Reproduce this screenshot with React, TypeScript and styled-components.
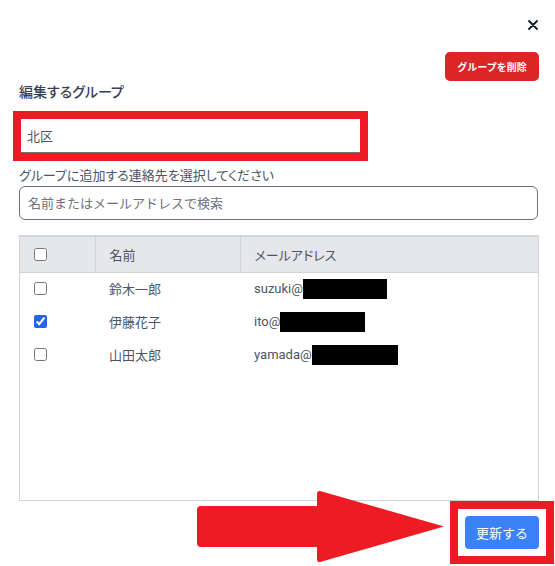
import React from 'react';
import styled, { createGlobalStyle } from 'styled-components';

const GlobalStyle = createGlobalStyle`
    html, body {
        margin: 0;
        padding: 0;
        background: #ffffff;
    }
    body {
        font-family: Roboto, "Noto Sans CJK JP", sans-serif;
        font-feature-settings: "palt";
        color: #4b5563;
    }
    * {
        box-sizing: border-box;
    }
`;

const Modal = styled.section`
    display: flex;
    flex-direction: column;
    width: 555px;
    height: 566px;
    padding: 0 16px 0 19px;
    background: #ffffff;
`;

const CloseRow = styled.div`
    display: flex;
    justify-content: flex-end;
    align-items: flex-start;
    height: 52px;
    padding-top: 20px;
`;

const CloseButton = styled.button`
    display: flex;
    width: 10px;
    height: 10px;
    padding: 0;
    margin-right: 1px;
    border: none;
    background: none;
    cursor: pointer;
`;

const DeleteRow = styled.div`
    display: flex;
    justify-content: flex-end;
`;

const DeleteButton = styled.button`
    height: 29px;
    width: 94px;
    padding: 0;
    border: none;
    border-radius: 5px;
    background: #dc2626;
    color: #ffffff;
    font-family: inherit;
    font-size: 10px;
    font-weight: 700;
    cursor: pointer;
`;

const Title = styled.h2`
    margin: 1px 0 0;
    font-size: 14px;
    line-height: 20px;
    font-weight: 500;
    color: #374151;
`;

/* 赤枠の注釈 */
const Annotation = styled.div`
    width: fit-content;
    border: 8px solid #ed1c24;
`;

const NameHighlight = styled(Annotation)`
    margin: 9px 0 0 -6px;
`;

const NameInput = styled.input`
    display: block;
    width: 339px;
    height: 34px;
    padding: 0 6px;
    border: none;
    border-bottom: 1px solid #6b7280;
    outline: none;
    font-family: inherit;
    font-size: 13px;
    color: #4b5563;
`;

const FieldLabel = styled.label`
    margin-top: 6px;
    font-size: 13px;
    line-height: 18px;
    color: #4b5563;
`;

const SearchInput = styled.input`
    width: 519px;
    height: 34px;
    margin-top: 1px;
    padding: 0 8px;
    border: 1px solid #6b7280;
    border-radius: 6px;
    outline: none;
    font-family: inherit;
    font-size: 13px;
    color: #4b5563;

    &::placeholder {
        color: #6b7280;
    }
`;

const TableBox = styled.div`
    height: 266px;
    margin-top: 15px;
    border: 1px solid #d1d5db;
    border-top-width: 2px;
`;

const Table = styled.table`
    width: 100%;
    border-collapse: collapse;
    table-layout: fixed;
`;

const HeadCell = styled.th<{ $w?: number }>`
    width: ${({ $w }) => ($w ? `${$w}px` : 'auto')};
    height: 35px;
    padding: 0 14px;
    background: #e5e7eb;
    border-bottom: 1px solid #d1d5db;
    border-right: 1px solid #d1d5db;
    text-align: left;
    font-size: 13px;
    font-weight: 400;
    color: #4b5563;

    &:last-child {
        border-right: none;
    }
`;

const Cell = styled.td`
    height: 33px;
    padding: 0 14px;
    font-size: 13px;
    color: #4b5563;
    white-space: nowrap;
`;

const Check = styled.input.attrs({ type: 'checkbox' })`
    display: block;
    width: 13px;
    height: 13px;
    margin: 0;
    accent-color: #2563eb;
`;

const Email = styled.span`
    display: inline-flex;
    align-items: center;
`;

const Redacted = styled.span<{ $w: number }>`
    display: inline-block;
    width: ${({ $w }) => $w}px;
    height: 20px;
    background: #000000;
`;

const Footer = styled.div`
    position: relative;
    display: flex;
    justify-content: flex-end;
`;

const Arrow = styled.svg`
    position: absolute;
    right: 94px;
    top: -11px;
`;

const ButtonHighlight = styled(Annotation)`
    margin-right: -15px;
    padding: 7px;
`;

const UpdateButton = styled.button`
    display: block;
    width: 74px;
    height: 33px;
    padding: 0;
    border: none;
    border-radius: 4px;
    background: #3b82f6;
    color: #ffffff;
    font-family: inherit;
    font-size: 13px;
    cursor: pointer;
`;

interface Contact {
    name: string;
    user: string;
    checked: boolean;
    hidden: number;
}

const contacts: Contact[] = [
    { name: '鈴木一郎', user: 'suzuki@', checked: false, hidden: 84 },
    { name: '伊藤花子', user: 'ito@', checked: true, hidden: 85 },
    { name: '山田太郎', user: 'yamada@', checked: false, hidden: 86 },
];

function App() {
    return (
        <>
            <GlobalStyle />
            <Modal>
                <CloseRow>
                    <CloseButton aria-label="閉じる">
                        <svg width="10" height="10" viewBox="0 0 10 10">
                            <path d="M1 1 L9 9 M9 1 L1 9" stroke="#111827" strokeWidth="1.8" strokeLinecap="round" />
                        </svg>
                    </CloseButton>
                </CloseRow>
                <DeleteRow>
                    <DeleteButton>グループを削除</DeleteButton>
                </DeleteRow>
                <Title>編集するグループ</Title>
                <NameHighlight>
                    <NameInput defaultValue="北区" />
                </NameHighlight>
                <FieldLabel>グループに追加する連絡先を選択してください</FieldLabel>
                <SearchInput placeholder="名前またはメールアドレスで検索" />
                <TableBox>
                    <Table>
                        <thead>
                            <tr>
                                <HeadCell $w={75}><Check /></HeadCell>
                                <HeadCell $w={145}>名前</HeadCell>
                                <HeadCell>メールアドレス</HeadCell>
                            </tr>
                        </thead>
                        <tbody>
                            {contacts.map((c) => (
                                <tr key={c.name}>
                                    <Cell><Check defaultChecked={c.checked} /></Cell>
                                    <Cell>{c.name}</Cell>
                                    <Cell>
                                        <Email>{c.user}<Redacted $w={c.hidden} /></Email>
                                    </Cell>
                                </tr>
                            ))}
                        </tbody>
                    </Table>
                </TableBox>
                <Footer>
                    <Arrow width="248" height="73" viewBox="0 0 248 73">
                        <rect x="0" y="16" width="126" height="41" rx="4" fill="#ed1c24" />
                        <path d="M120 4 Q120 0 124 1.2 L247 36.5 L124 71.8 Q120 73 120 69 Z" fill="#ed1c24" />
                    </Arrow>
                    <ButtonHighlight>
                        <UpdateButton>更新する</UpdateButton>
                    </ButtonHighlight>
                </Footer>
            </Modal>
        </>
    );
}

export default App;
